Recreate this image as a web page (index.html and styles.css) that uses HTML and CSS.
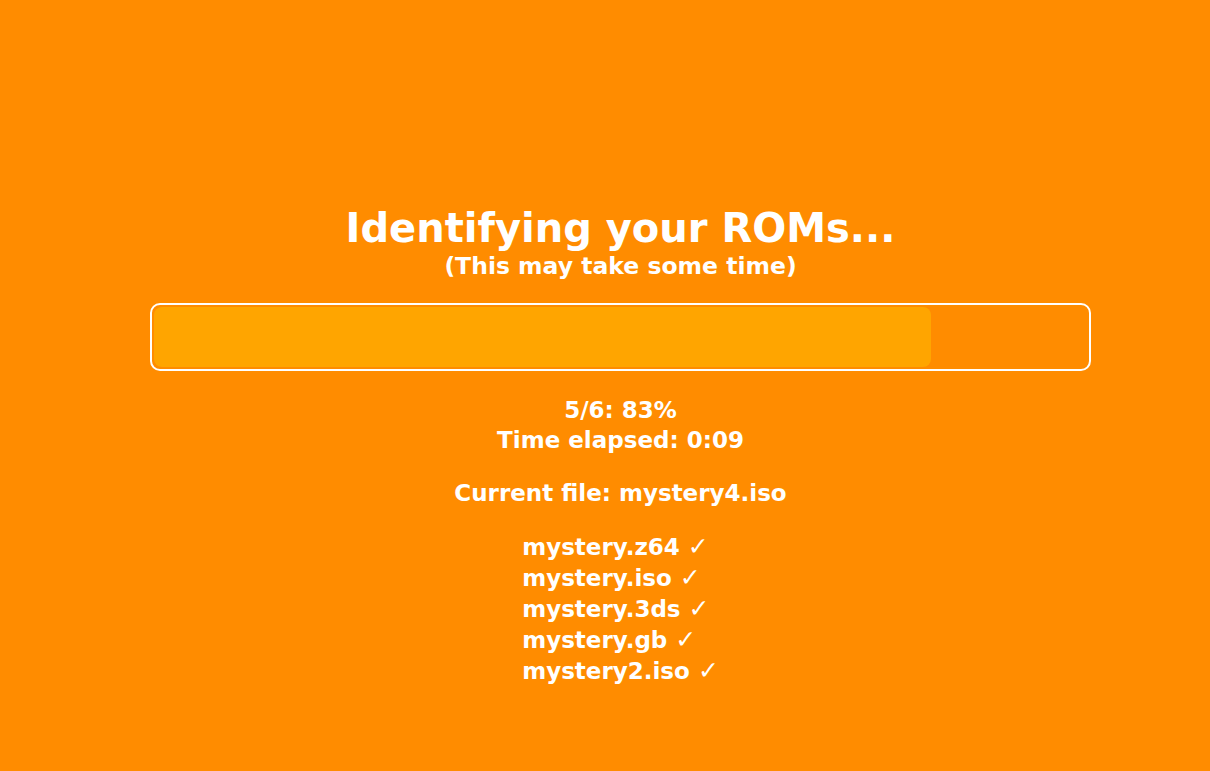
FILE: index.html
```html
<!DOCTYPE html>
<html>
<head>
<meta charset="utf-8">
<link rel="stylesheet" href="styles.css">
</head>
<body>
<main class="page">
  <h1 class="title">Identifying your ROMs...</h1>
  <p class="subtitle">(This may take some time)</p>
  <div class="bar"><div class="fill" style="width: 83.33%"></div></div>
  <div class="stats">
    <div>5/6: 83%</div>
    <div>Time elapsed: 0:09</div>
  </div>
  <div class="current">Current file: mystery4.iso</div>
  <ul class="files">
    <li>mystery.z64 <span class="check">✓</span></li>
    <li>mystery.iso <span class="check">✓</span></li>
    <li>mystery.3ds <span class="check">✓</span></li>
    <li>mystery.gb <span class="check">✓</span></li>
    <li>mystery2.iso <span class="check">✓</span></li>
  </ul>
</main>
</body>
</html>
```
FILE: styles.css
```css
html, body {
  margin: 0;
  padding: 0;
  background: #ff8c00;
  height: 100%;
}
body {
  font-family: "DejaVu Sans", Verdana, sans-serif;
  font-weight: bold;
  color: #ffffff;
}
.page {
  box-sizing: border-box;
  min-height: 100%;
  padding: 204px 0 0 31px;
  display: flex;
  flex-direction: column;
  align-items: center;
  text-align: center;
}
.title {
  margin: 0;
  font-size: 40px;
  line-height: 48px;
}
.subtitle {
  margin: 0;
  font-size: 23.5px;
  line-height: 28px;
}
.bar {
  margin-top: 23px;
  width: 941px;
  height: 68px;
  box-sizing: border-box;
  border: 2px solid #ffffff;
  border-radius: 10px;
  padding: 2px;
  display: flex;
}
.fill {
  background: #ffa500;
  border-radius: 8px;
  height: 100%;
}
.stats {
  margin-top: 24px;
  font-size: 23px;
  line-height: 30px;
}
.current {
  margin-top: 23px;
  font-size: 23px;
  line-height: 30px;
}
.files {
  list-style: none;
  margin: 24px 0 0;
  padding: 0;
  font-size: 23px;
  line-height: 31px;
  text-align: left;
}
.files li {
  height: 31px;
}
.check {
  font-size: 25px;
  line-height: 1;
}
```
